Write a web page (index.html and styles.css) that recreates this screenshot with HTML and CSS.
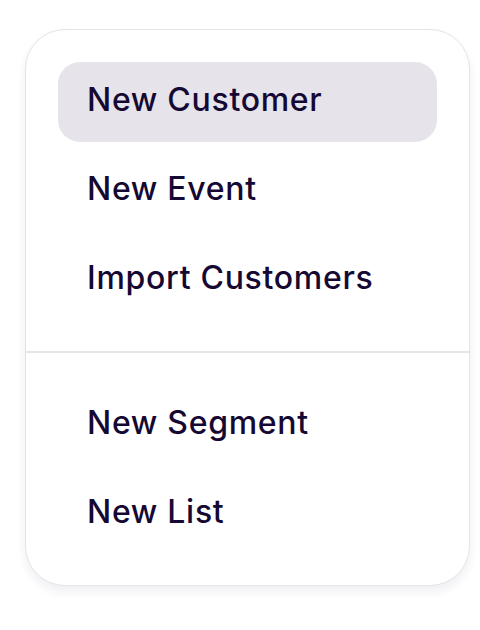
FILE: index.html
```html
<!DOCTYPE html>
<html lang="en">
<head>
<meta charset="utf-8">
<link rel="stylesheet" href="styles.css">
</head>
<body>
<div class="menu">
  <div class="section">
    <div class="item active">New Customer</div>
    <div class="item">New Event</div>
    <div class="item">Import Customers</div>
  </div>
  <div class="divider"></div>
  <div class="section">
    <div class="item">New Segment</div>
    <div class="item">New List</div>
  </div>
</div>
</body>
</html>
```
FILE: styles.css
```css
html, body {
  margin: 0;
  padding: 0;
  background: #ffffff;
}
body {
  width: 480px;
  height: 630px;
  padding: 29px 10px 0 25px;
  box-sizing: border-box;
  font-family: Inter, "Noto Sans", sans-serif;
}
.menu {
  width: 445px;
  box-sizing: border-box;
  border: 1px solid #e5e3e9;
  border-radius: 40px;
  background: #ffffff;
  box-shadow: 0 6px 10px rgba(40, 30, 70, 0.07);
}
.section {
  display: flex;
  flex-direction: column;
  gap: 9px;
  padding: 32px 32px 31px;
}
.divider {
  height: 2px;
  background: #e7e5eb;
}
.item {
  height: 80px;
  box-sizing: border-box;
  display: flex;
  align-items: center;
  padding: 0 30px 6px 29px;
  border-radius: 22px;
  font-size: 32px;
  font-weight: 500;
  color: #150933;
  letter-spacing: 0.7px;
}
.item.active {
  background: #e6e4ea;
}
```
